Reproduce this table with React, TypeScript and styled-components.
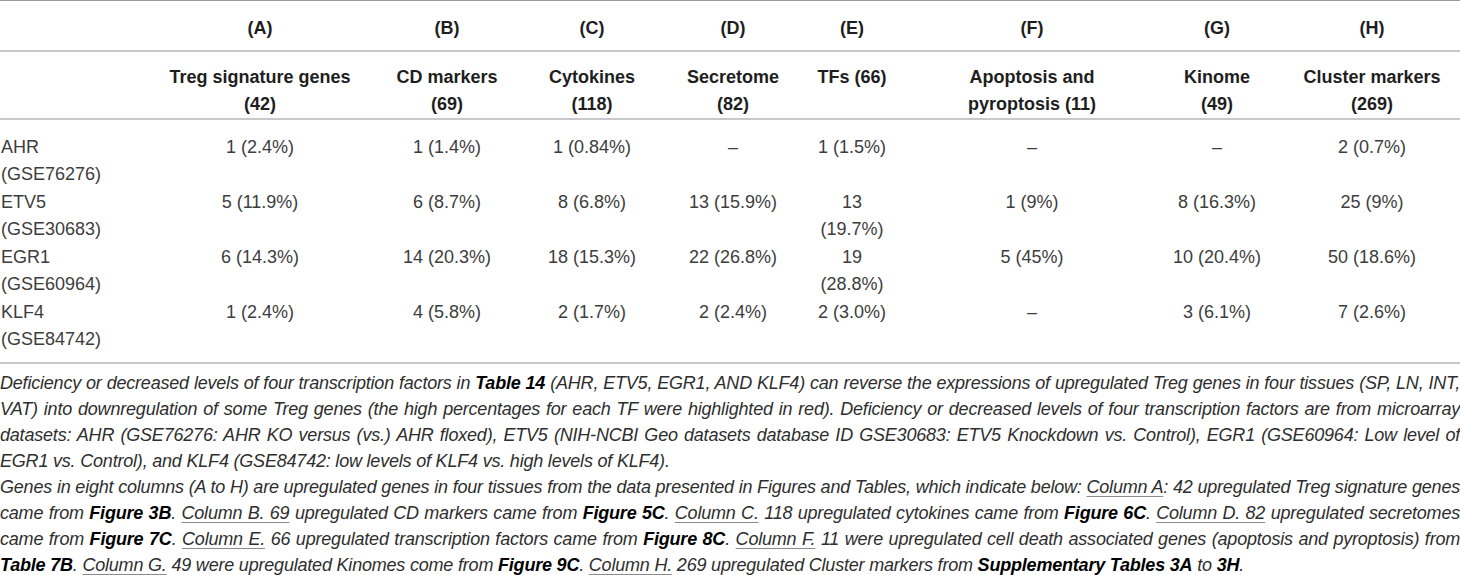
import styled, { createGlobalStyle } from "styled-components";

const GlobalStyle = createGlobalStyle`
  html, body {
    margin: 0;
    padding: 0;
    background: #ffffff;
  }
  body {
    font-family: "Liberation Sans", Arial, sans-serif;
  }
`;

// column widths + inner padding so each column's content sits where the figure has it
const COLS = [
    { w: 131, pl: 1, pr: 8, align: "left" },
    { w: 248, pl: 24, pr: 14, align: "center" },
    { w: 142, pl: 13, pr: 19, align: "center" },
    { w: 139, pl: 16, pr: 13, align: "center" },
    { w: 140, pl: 13, pr: 7, align: "center" },
    { w: 123, pl: 12, pr: 31, align: "center" },
    { w: 210, pl: 29, pr: 21, align: "center" },
    { w: 147, pl: 34, pr: 13, align: "center" },
    { w: 180, pl: 12, pr: 8, align: "center" },
];

const template = COLS.map((c) => c.w + "px").join(" ");

const Page = styled.div`
    width: 1460px;
    color: #333;
`;

const Table = styled.div`
    display: flex;
    flex-direction: column;
`;

const Row = styled.div`
    display: grid;
    grid-template-columns: ${template};
    line-height: 27px;
    font-size: 18px;
`;

const LetterRow = styled(Row)`
    border-top: 1px solid #9b9b9b;
    border-bottom: 2px solid #c8c8c8;
    padding: 14px 0 8px;
    font-weight: 700;
    color: #1e1e1e;
`;

const TitleRow = styled(Row)`
    border-bottom: 2px solid #c8c8c8;
    padding: 12px 0 0;
    font-weight: 700;
    color: #1e1e1e;
`;

const Body = styled.div`
    display: flex;
    flex-direction: column;
    gap: 1px;
    padding: 14px 0 9px;
    border-bottom: 2px solid #c8c8c8;
`;

const DataRow = styled(Row)`
    min-height: 54px;
    color: #3d3d3d;
`;

const Cell = styled.div<{ $col: number }>`
    padding-left: ${({ $col }) => COLS[$col].pl}px;
    padding-right: ${({ $col }) => COLS[$col].pr}px;
    text-align: ${({ $col }) => COLS[$col].align};
`;

const Notes = styled.div`
    margin-top: 6px;
    font-size: 18px;
    line-height: 26px;
    font-style: italic;
    letter-spacing: -0.2px;
    text-align: justify;
    color: #2e2e2e;
`;

const Note = styled.p`
    margin: 0;
`;

const Ref = styled.b`
    color: #000;
    font-weight: 700;
`;

const Col = styled.span`
    text-decoration: underline;
    text-decoration-color: #8a8a8a;
    text-underline-offset: 3px;
`;

const headers = ["", "(A)", "(B)", "(C)", "(D)", "(E)", "(F)", "(G)", "(H)"];
const titles = [
    "",
    "Treg signature genes (42)",
    "CD markers (69)",
    "Cytokines (118)",
    "Secretome (82)",
    "TFs (66)",
    "Apoptosis and pyroptosis (11)",
    "Kinome (49)",
    "Cluster markers (269)",
];

const rows = [
    ["AHR (GSE76276)", "1 (2.4%)", "1 (1.4%)", "1 (0.84%)", "–", "1 (1.5%)", "–", "–", "2 (0.7%)"],
    ["ETV5 (GSE30683)", "5 (11.9%)", "6 (8.7%)", "8 (6.8%)", "13 (15.9%)", "13 (19.7%)", "1 (9%)", "8 (16.3%)", "25 (9%)"],
    ["EGR1 (GSE60964)", "6 (14.3%)", "14 (20.3%)", "18 (15.3%)", "22 (26.8%)", "19 (28.8%)", "5 (45%)", "10 (20.4%)", "50 (18.6%)"],
    ["KLF4 (GSE84742)", "1 (2.4%)", "4 (5.8%)", "2 (1.7%)", "2 (2.4%)", "2 (3.0%)", "–", "3 (6.1%)", "7 (2.6%)"],
];

const App = () => {
    return (
        <Page>
            <GlobalStyle />
            <Table>
                <LetterRow>
                    {headers.map((h, i) => (
                        <Cell key={i} $col={i}>{h}</Cell>
                    ))}
                </LetterRow>
                <TitleRow>
                    {titles.map((t, i) => (
                        <Cell key={i} $col={i}>{t}</Cell>
                    ))}
                </TitleRow>
                <Body>
                    {rows.map((r, ri) => (
                        <DataRow key={ri}>
                            {r.map((v, i) => (
                                <Cell key={i} $col={i}>{v}</Cell>
                            ))}
                        </DataRow>
                    ))}
                </Body>
            </Table>
            <Notes>
                <Note>
                    Deficiency or decreased levels of four transcription factors in <Ref>Table 14</Ref> (AHR, ETV5, EGR1, AND KLF4) can reverse the expressions of upregulated Treg genes in four tissues (SP, LN, INT, VAT) into downregulation of some Treg genes (the high percentages for each TF were highlighted in red). Deficiency or decreased levels of four transcription factors are from microarray datasets: AHR (GSE76276: AHR KO versus (vs.) AHR floxed), ETV5 (NIH-NCBI Geo datasets database ID GSE30683: ETV5 Knockdown vs. Control), EGR1 (GSE60964: Low level of EGR1 vs. Control), and KLF4 (GSE84742: low levels of KLF4 vs. high levels of KLF4).
                </Note>
                <Note>
                    Genes in eight columns (A to H) are upregulated genes in four tissues from the data presented in Figures and Tables, which indicate below: <Col>Column A</Col>: 42 upregulated Treg signature genes came from <Ref>Figure 3B</Ref>. <Col>Column B. 69</Col> upregulated CD markers came from <Ref>Figure 5C</Ref>. <Col>Column C.</Col> 118 upregulated cytokines came from <Ref>Figure 6C</Ref>. <Col>Column D. 82</Col> upregulated secretomes came from <Ref>Figure 7C</Ref>. <Col>Column E.</Col> 66 upregulated transcription factors came from <Ref>Figure 8C</Ref>. <Col>Column F.</Col> 11 were upregulated cell death associated genes (apoptosis and pyroptosis) from <Ref>Table 7B</Ref>. <Col>Column G.</Col> 49 were upregulated Kinomes come from <Ref>Figure 9C</Ref>. <Col>Column H.</Col> 269 upregulated Cluster markers from <Ref>Supplementary Tables 3A</Ref> to <Ref>3H</Ref>.
                </Note>
            </Notes>
        </Page>
    );
};

export default App;
